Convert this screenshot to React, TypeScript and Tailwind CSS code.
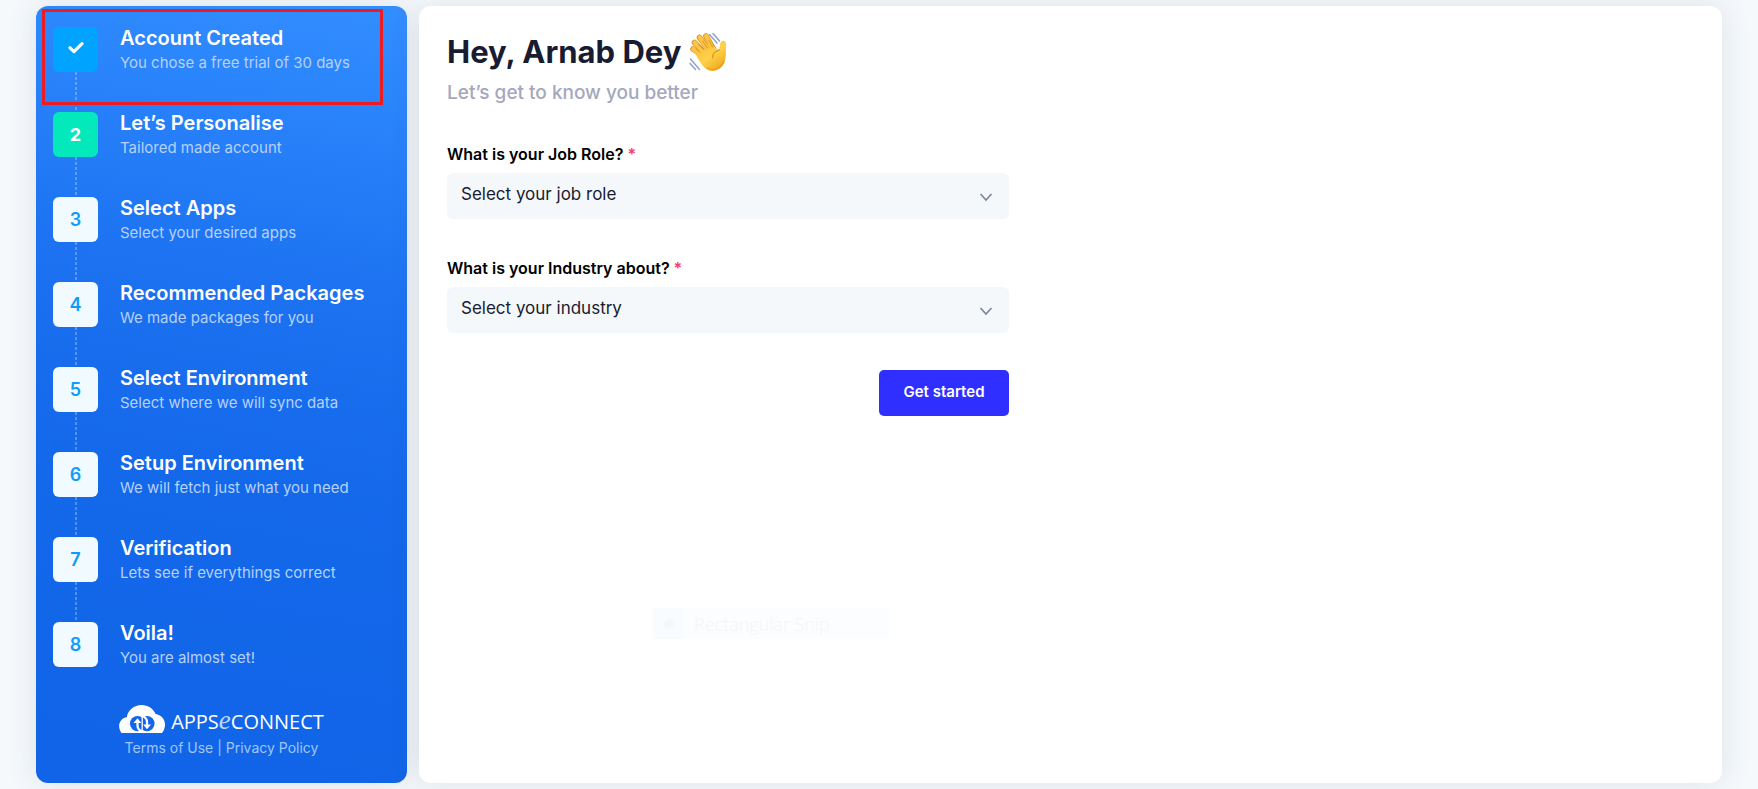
import React from "react";

type StepState = "done" | "active" | "pending";
type Step = { title: string; note: string; state: StepState };

const steps: Step[] = [
  { title: "Account Created", note: "You chose a free trial of 30 days", state: "done" },
  { title: "Let’s Personalise", note: "Tailored made account", state: "active" },
  { title: "Select Apps", note: "Select your desired apps", state: "pending" },
  { title: "Recommended Packages", note: "We made packages for you", state: "pending" },
  { title: "Select Environment", note: "Select where we will sync data", state: "pending" },
  { title: "Setup Environment", note: "We will fetch just what you need", state: "pending" },
  { title: "Verification", note: "Lets see if everythings correct", state: "pending" },
  { title: "Voila!", note: "You are almost set!", state: "pending" },
];

const badgeStyle: Record<StepState, string> = {
  done: "bg-[#00a3ff] text-white font-bold",
  active: "bg-[#04e9bb] text-white font-bold",
  pending: "bg-[#f1faff] text-[#0f9cf8] font-semibold",
};

function StepRow({ step, index, last }: { step: Step; index: number; last: boolean }) {
  return (
    <li className="flex h-[85px] gap-[22px]">
      <div className="flex w-[45px] flex-col items-center">
        <span
          className={`flex h-[45px] w-full shrink-0 items-center justify-center rounded-md text-[18px] ${badgeStyle[step.state]}`}
        >
          {step.state === "done" ? (
            <svg className="mb-1" width="16" height="13" viewBox="0 0 16 13" fill="none" aria-hidden="true">
              <path d="M2 6.8 6 10.600 14 2.600" stroke="#fff" strokeWidth="3.2" strokeLinecap="round" strokeLinejoin="round" />
            </svg>
          ) : (
            index + 1
          )}
        </span>
        {!last && (
          <svg className="w-[2px] flex-1" aria-hidden="true">
            <line x1="1" y1="0" x2="1" y2="100%" stroke="#fff" strokeOpacity=".28" strokeWidth="2" strokeDasharray="3 2" />
          </svg>
        )}
      </div>
      <div className="whitespace-nowrap">
        <h3 className="text-[20px] leading-[22px] font-semibold text-white">{step.title}</h3>
        <p className="mt-[3px] text-[15px] leading-[22px] text-[#b5d1fc]">{step.note}</p>
      </div>
    </li>
  );
}

function Logo() {
  return (
    <div className="flex items-end gap-[6px] text-white">
      <svg width="46" height="28" viewBox="0 0 46 28" aria-hidden="true">
        <path
          d="M2.500 28C-2.500 21 1 13 7.800 12.200C9 5 15 0 22.500 0C29 0 34.500 3.800 36.500 9C42 9.800 46 14 46 19.500C46 22.500 45 25.500 43 28Z"
          fill="#fff"
        />
        <circle cx="18.500" cy="18.600" r="7.600" fill="#1466e9" />
        <circle cx="28" cy="18.600" r="7.600" fill="#1466e9" />
        <g fill="none" stroke="#fff" strokeWidth="2.200">
          <path d="M18.500 16.500V20.500C18.500 23.500 20 25.500 23.500 26.500" />
          <path d="M28 21V17C28 14 26.500 12 22.500 10.800" />
          <path d="M23.200 11.500V25.500" strokeWidth="1.300" />
        </g>
        <path d="M14.500 18 18.500 13.200 22.300 18ZM24.200 19.500H32L28 24.200Z" fill="#fff" />
      </svg>
      <span className="flex items-baseline font-['Open_Sans','Noto_Sans',sans-serif] text-[20px] leading-[22px]">
        APPS
        <i className="font-['Liberation_Serif',serif] text-[27px] leading-[22px] text-[#bcd6fb]">e</i>
        CONNECT
      </span>
    </div>
  );
}

function WavingHand() {
  return (
    <svg width="38" height="40" viewBox="0 0 38 40" aria-hidden="true">
      <defs>
        <linearGradient id="skin" x1="0" y1="0" x2=".8" y2="1">
          <stop offset="0" stopColor="#f5b52f" />
          <stop offset=".55" stopColor="#ffd24a" />
          <stop offset="1" stopColor="#efa51c" />
        </linearGradient>
      </defs>
      <g stroke="#dc9424" strokeLinecap="round" strokeWidth="5.600">
        <path d="M17 26 4 17" />
        <path d="M17 22 5.500 10.500" />
        <path d="M21 19 10.500 5.500" />
        <path d="M25 18 17 4" />
      </g>
      <g stroke="#fcc544" strokeLinecap="round" strokeWidth="4.200">
        <path d="M17 27 4.200 17" />
        <path d="M17 23 5.700 10.500" />
        <path d="M21 20 10.700 5.500" />
        <path d="M25 20 17.200 4" />
      </g>
      <path
        d="M6 21C10 20 12 19 14.500 17L25 14.500C27 16 28 18 30 17.500C31 15.500 30.500 12 32 10C34 7.500 37.500 9 37 12C36.500 16 37.500 20 36.500 26C35.500 34 30 39 23.500 39C17 39 13 34.500 6 21Z"
        fill="url(#skin)"
      />
      <path d="M30.500 18C26 19 23.500 22 23.500 26" fill="none" stroke="#e59e1c" strokeWidth="1.300" strokeLinecap="round" />
      <path d="m11 20-4-3M14.500 17.500l-5-5M18.500 16l-5-7M23.500 15l-3.500-6.500" stroke="#dc9424" strokeLinecap="round" />
      <path d="M18 36C24 39 32 36.500 35 29" fill="none" stroke="#e4951b" strokeWidth="1.200" opacity=".7" />
      <g fill="none" stroke="#8fa4cb" strokeWidth="1.500" strokeLinecap="round">
        <path d="M20.500 2.500 28 11M24 1.500 30.500 9M1.500 27 10.500 37.500M1 31.500 6.500 37.500" />
      </g>
    </svg>
  );
}

function SelectField({ id, label, placeholder }: { id: string; label: string; placeholder: string }) {
  return (
    <div>
      <label htmlFor={id} className="block text-[16px] leading-[22px] font-semibold text-black">
        {label} <span className="text-[#f1416c]">*</span>
      </label>
      <div className="relative mt-2">
        <select
          id={id}
          defaultValue=""
          className="block h-[46px] w-full appearance-none rounded-md bg-[#f5f8fa] pr-10 pb-[2px] pl-[14px] text-[17px] text-[#181c32] outline-none"
        >
          <option value="">{placeholder}</option>
        </select>
        <svg
          className="pointer-events-none absolute top-5 right-4"
          width="14"
          height="9"
          viewBox="0 0 14 9"
          fill="none"
          aria-hidden="true"
        >
          <path d="m1.500 1 5.500 6 5.500-6" stroke="#7e8299" strokeWidth="1.600" />
        </svg>
      </div>
    </div>
  );
}

export default function App() {
  return (
    <div className="flex min-h-screen gap-3 bg-[#f5f9fc] px-9 pt-[6px] pb-[6px] font-['Inter','Open_Sans',sans-serif]">
      <aside className="relative flex w-[371px] shrink-0 flex-col rounded-[12px] bg-[linear-gradient(190deg,#338eff_0%,#2a84fb_13%,#1c72f1_36%,#1468ea_60%,#1164e7_100%)] px-[17px] pt-[21px] shadow-[0_0_30px_rgba(55,65,90,0.12)]">
        <ol>
          {steps.map((step, i) => (
            <StepRow key={step.title} step={step} index={i} last={i === steps.length - 1} />
          ))}
        </ol>
        <div className="mt-[-2px] flex flex-col items-center">
          <Logo />
          <p className="mt-1 text-[14px] leading-[22px] text-[#9fc6fb]">
            <a href="#terms">Terms of Use</a> | <a href="#privacy">Privacy Policy</a>
          </p>
        </div>
        <div className="pointer-events-none absolute top-[3px] left-[6px] h-24 w-[341px] border-3 border-[#ec1c24]" />
      </aside>

      <main className="relative flex-1 rounded-[12px] bg-white px-7 pt-[26px] shadow-[0_0_30px_rgba(55,65,90,0.12)]">
        <h1 className="flex h-10 items-center gap-2 text-[31px] leading-10 font-bold text-[#181c32]">
          Hey, Arnab Dey <WavingHand />
        </h1>
        <p className="mt-[9px] text-[19px] leading-6 font-medium text-[#a5a7bd]">Let’s get to know you better</p>
        <form className="mt-[38px] flex max-w-[562px] flex-col" onSubmit={(e) => e.preventDefault()}>
          <div className="flex flex-col gap-[38px]">
            <SelectField id="job-role" label="What is your Job Role?" placeholder="Select your job role" />
            <SelectField id="industry" label="What is your Industry about?" placeholder="Select your industry" />
          </div>
          <button
            type="submit"
            className="mt-[37px] h-[46px] w-[130px] self-end rounded-[5px] bg-[#2f2fff] pb-[2px] text-[15px] font-semibold text-white"
          >
            Get started
          </button>
        </form>
        <div className="pointer-events-none absolute top-[602px] left-[234px] flex h-[31px] w-[236px] items-center bg-[#fcfdff]">
          <span className="flex h-full w-[31px] items-center justify-center bg-[#f8fcff]">
            <span className="size-[10px] rounded-full bg-[#f7f7f8]" />
          </span>
          <span className="ml-[10px] pt-[2px] font-['Open_Sans',sans-serif] text-[18px] font-light text-[#f5f5f7]">Rectangular Snip</span>
        </div>
      </main>
    </div>
  );
}
